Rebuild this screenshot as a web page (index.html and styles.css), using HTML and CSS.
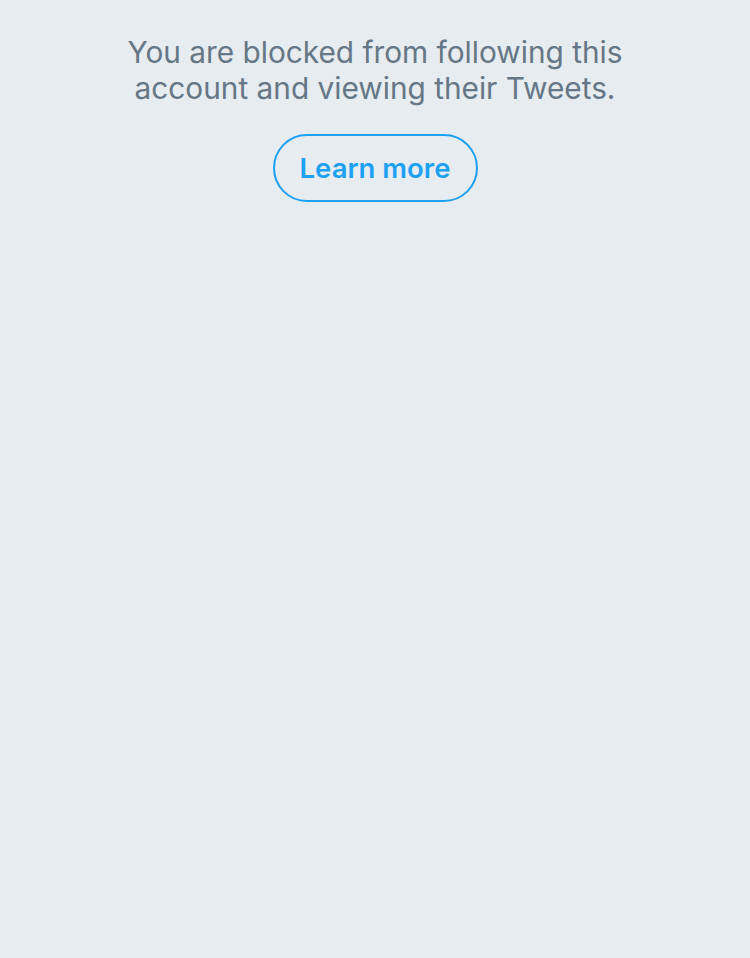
FILE: index.html
```html
<!DOCTYPE html>
<html lang="en">
  <head>
    <meta charset="UTF-8" />
    <meta name="viewport" content="width=device-width, initial-scale=1.0" />
    <title>Blocked</title>
    <link rel="stylesheet" href="styles.css">
  </head>
  <body>
    <main class="blocked">
      <p class="blocked-text">You are blocked from following this account and viewing their Tweets.</p>
      <a class="btn-outline" href="#">Learn more</a>
    </main>
  </body>
</html>
```

FILE: styles.css
```css
html {
  box-sizing: border-box;
  font-family: Inter, "Noto Sans", sans-serif;
  font-size: 16px;
}

*,
*:before,
*:after {
  box-sizing: inherit;
}

body {
  margin: 0;
  min-height: 100vh;
  background-color: #e6ecf0;
}

.blocked {
  display: flex;
  flex-direction: column;
  align-items: center;
  padding-top: 34px;
}

.blocked-text {
  margin: 0;
  width: 530px;
  text-align: center;
  color: #657786;
  font-size: 29.8px;
  line-height: 36px;
}

.btn-outline {
  margin-top: 28px;
  display: flex;
  align-items: center;
  justify-content: center;
  width: 205px;
  height: 68px;
  border: 2px solid #1da1f2;
  border-radius: 34px;
  color: #1da1f2;
  font-size: 27.5px;
  font-weight: 600;
  text-decoration: none;
}
```
